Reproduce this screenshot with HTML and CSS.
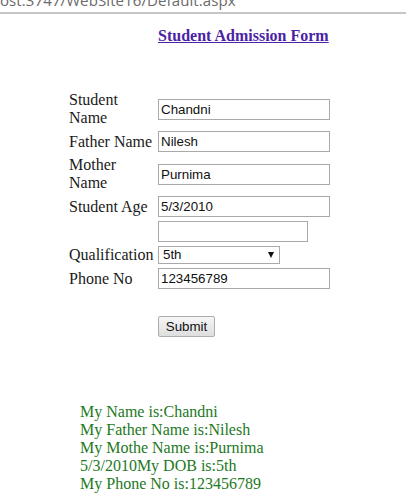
FILE: index.html
```html
<!DOCTYPE html>
<html>
<head>
<meta charset="utf-8">
<title>Default.aspx</title>
<link rel="stylesheet" href="styles.css">
</head>
<body>
<div class="chrome"><span class="url">ost:3747/WebSite16/Default.aspx</span></div>
<div class="title"><a class="title-link" href="#">Student Admission Form</a></div>
<table class="form">
  <tr><td class="lbl">Student Name</td><td><input class="txt" value="Chandni"></td></tr>
  <tr><td class="lbl">Father Name</td><td><input class="txt" value="Nilesh"></td></tr>
  <tr><td class="lbl">Mother Name</td><td><input class="txt" value="Purnima"></td></tr>
  <tr><td class="lbl">Student Age</td><td><input class="txt" value="5/3/2010"></td></tr>
  <tr><td class="lbl"></td><td><input class="txt short" value=""></td></tr>
  <tr><td class="lbl">Qualification</td><td><div class="sel"><span class="sel-val">5th</span><span class="sel-arrow"></span></div></td></tr>
  <tr><td class="lbl">Phone No</td><td><input class="txt" value="123456789"></td></tr>
</table>
<div class="actions"><button class="btn">Submit</button></div>
<div class="output">
  <div>My Name is:Chandni</div>
  <div>My Father Name is:Nilesh</div>
  <div>My Mothe Name is:Purnima</div>
  <div>5/3/2010My DOB is:5th</div>
  <div>My Phone No is:123456789</div>
</div>
</body>
</html>
```

FILE: styles.css
```css
html, body {
  margin: 0;
  padding: 0;
  background: #ffffff;
}
body {
  font-family: "Liberation Serif", "Times New Roman", serif;
  font-size: 16px;
  line-height: 18px;
  color: #1a1a1a;
}
.chrome {
  height: 12px;
  overflow: hidden;
  border-bottom: 2px solid #c6c6c6;
  background: #ffffff;
}
.url {
  display: block;
  margin-top: -8px;
  font-family: "Open Sans", "Liberation Sans", sans-serif;
  font-size: 15px;
  line-height: 16px;
  color: #6a6a6a;
  white-space: nowrap;
  letter-spacing: 0.1px;
}
.title {
  margin-top: 13px;
  padding-left: 158px;
  font-weight: bold;
}
.title-link {
  color: #4b22a6;
  text-decoration: underline;
}
.form {
  margin-top: 43px;
  margin-left: 66px;
  border-collapse: separate;
  border-spacing: 2px;
}
.form td {
  padding: 1px;
  vertical-align: middle;
}
.lbl {
  width: 85px;
  color: #1a1a1a;
}
.txt {
  box-sizing: border-box;
  width: 172px;
  height: 21px;
  margin: 0;
  padding: 1px 2px;
  border: 1px solid #a9a9a9;
  font-family: "Liberation Sans", Arial, sans-serif;
  font-size: 13.33px;
  color: #111;
  display: block;
}
.txt.short {
  width: 150px;
}
.sel {
  position: relative;
  box-sizing: border-box;
  width: 122px;
  height: 18px;
  border: 1px solid #a9a9a9;
  font-family: "Liberation Sans", Arial, sans-serif;
  font-size: 13.33px;
  line-height: 16px;
  color: #111;
  padding-left: 4px;
}
.sel-arrow {
  position: absolute;
  left: 109px;
  top: 5px;
  width: 0;
  height: 0;
  border-left: 3px solid transparent;
  border-right: 3px solid transparent;
  border-top: 6px solid #111;
}
.actions {
  margin-top: 24px;
  padding-left: 158px;
}
.btn {
  box-sizing: border-box;
  width: 57px;
  height: 21px;
  margin: 0;
  padding: 0;
  border: 1px solid #adadad;
  border-radius: 2px;
  background: linear-gradient(#f6f6f6, #dedede);
  font-family: "Liberation Sans", Arial, sans-serif;
  font-size: 13.33px;
  color: #111;
}
.output {
  margin-top: 66px;
  padding-left: 80px;
  color: #237823;
}
```
